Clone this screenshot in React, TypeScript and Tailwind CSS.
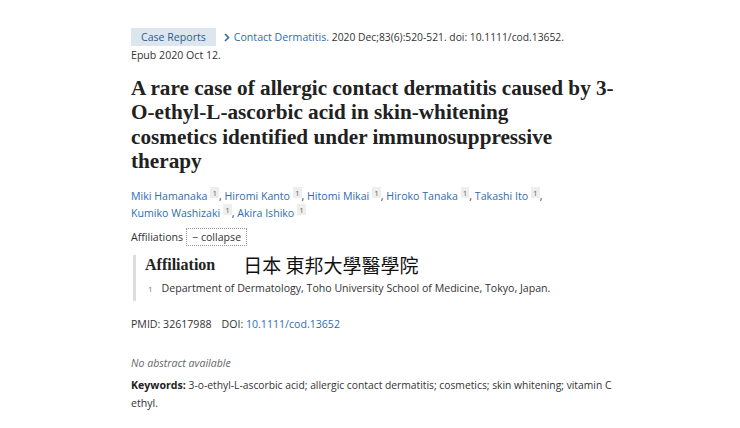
import React from "react";

const authors = [
  "Miki Hamanaka",
  "Hiromi Kanto",
  "Hitomi Mikai",
  "Hiroko Tanaka",
  "Takashi Ito",
  "Kumiko Washizaki",
  "Akira Ishiko",
];

function Sup() {
  return (
    <sup className="ml-[3px] bg-[#eeeeee] px-[2px] text-[8px] text-[#666]">1</sup>
  );
}

export default function App() {
  return (
    <div
      className="h-[428px] w-[740px] overflow-hidden bg-white pl-[131px] pt-[28px] text-[10.6px] text-[#333]"
      style={{ fontFamily: '"Open Sans", "Noto Sans", sans-serif' }}
    >
      <div className="leading-[18px]">
        <span className="mr-[8px] inline-block bg-[#dde6ef] px-[10px] text-[#2d5c8f]">Case Reports</span>
        <span className="text-[#2f6db0]">
          <svg className="mr-[4px] inline-block align-[-1px]" width="6" height="9" viewBox="0 0 6 9">
            <path d="M1 1l3.5 3.5L1 8" fill="none" stroke="#2f6db0" strokeWidth="1.6" />
          </svg>
          Contact Dermatitis.
        </span>{" "}
        <span className="text-[10.3px]">2020 Dec;83(6):520-521. doi: 10.1111/cod.13652.</span>
        <br />
        Epub 2020 Oct 12.
      </div>

      <h1
        className="mt-[12px] text-[21.2px] font-bold leading-[24.4px] text-[#212121]"
        style={{ fontFamily: '"Liberation Serif", serif' }}
      >
        A rare case of allergic contact dermatitis caused by 3-
        <br />
        O-ethyl-L-ascorbic acid in skin-whitening
        <br />
        cosmetics identified under immunosuppressive
        <br />
        therapy
      </h1>

      <div className="mt-[14px] leading-[17px]">
        {authors.map((a, i) => (
          <span key={a}>
            <span className="text-[#2f6db0]">{a}</span>
            <Sup />
            {i < authors.length - 1 ? ", " : ""}
            {i === 4 ? <br /> : null}
          </span>
        ))}
      </div>

      <div className="mt-[6px] flex items-center leading-[16px]">
        Affiliations
        <span className="ml-[3px] border border-dotted border-[#999] px-[5px] leading-[16px]">− collapse</span>
      </div>

      <div className="ml-[2px] mt-[9px] border-l-[3px] border-[#dddddd] pl-[9px]">
        <div className="flex h-[20px] items-center">
          <span
            className="text-[16px] font-bold leading-[18px] text-[#222]"
            style={{ fontFamily: '"Liberation Serif", serif' }}
          >
            Affiliation
          </span>
          <span
            className="ml-[28px] text-[19px] leading-[20px] text-[#111]"
            style={{ fontFamily: '"Noto Sans CJK TC", sans-serif' }}
          >
            日本 東邦大學醫學院
          </span>
        </div>
        <div className="mt-[5px] pb-[4px] leading-[17px]">
          <span className="ml-[3px] mr-[9px] text-[8px] text-[#777]">1</span>
          Department of Dermatology, Toho University School of Medicine, Tokyo, Japan.
        </div>
      </div>

      <div className="mt-[15px] leading-[16px]">
        PMID: 32617988<span className="ml-[10px]">DOI: </span>
        <span className="text-[#2f6db0]">10.1111/cod.13652</span>
      </div>

      <div className="mt-[23px] italic leading-[16px] text-[#666]">No abstract available</div>

      <div className="mt-[5px] whitespace-nowrap leading-[18px]">
        <span className="font-bold text-[#222]">Keywords:</span>{" "}
        <span className="text-[10.3px]">
          3-o-ethyl-L-ascorbic acid; allergic contact dermatitis; cosmetics; skin whitening; vitamin C
        </span>
        <br />
        ethyl.
      </div>
    </div>
  );
}
